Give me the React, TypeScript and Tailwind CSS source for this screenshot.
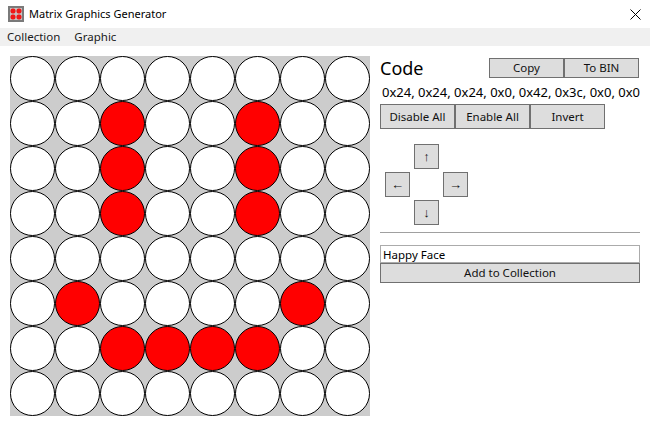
import React from 'react';

const FONT = "font-['Noto_Sans','Open_Sans',sans-serif]";

const matrix = [0x00, 0x24, 0x24, 0x24, 0x00, 0x42, 0x3c, 0x00];

const Btn = ({ label, className }: { label: string; className: string }) => (
    <button className={`flex items-center justify-center bg-[#dddddd] border border-[#707070] leading-none text-[#111] ${className}`}>
        {label}
    </button>
);

export default function App() {
    return (
        <div className={`w-[650px] h-[422px] bg-white overflow-hidden flex flex-col ${FONT}`}>
            {/* title bar */}
            <div className="h-[28px] flex items-center pl-[8px] pr-[9px]">
                <svg width="16" height="16" viewBox="0 0 16 16" className="shrink-0">
                    <rect x="1" y="1" width="14" height="14" fill="#c4c4c4" stroke="#7a7a7a" strokeWidth="2" />
                    <rect x="2.5" y="2.5" width="5" height="5" rx="2" fill="#f01818" />
                    <rect x="8.5" y="2.5" width="5" height="5" rx="2" fill="#f01818" />
                    <rect x="2.5" y="8.5" width="5" height="5" rx="2" fill="#f01818" />
                    <rect x="8.5" y="8.5" width="5" height="5" rx="2" fill="#f01818" />
                </svg>
                <span className="ml-[5px] text-[11px] text-black">Matrix Graphics Generator</span>
                <svg width="11" height="11" viewBox="0 0 11 11" className="ml-auto">
                    <path d="M0.5 0.5L10.5 10.5M10.5 0.5L0.5 10.5" stroke="#000" strokeWidth="1" fill="none" />
                </svg>
            </div>

            {/* menu */}
            <div className="h-[18px] bg-[#f0f0f0] flex items-center pl-[7px] gap-[14px] text-[11.5px] text-[#1a1a1a]">
                <span>Collection</span>
                <span>Graphic</span>
            </div>

            <div className="flex pt-[10px] pl-[10px]">
                {/* led matrix */}
                <div className="w-[360px] h-[360px] bg-[#cccccc] grid grid-cols-8 grid-rows-8 shrink-0">
                    {matrix.flatMap((row, y) =>
                        Array.from({ length: 8 }, (_, x) => {
                            const on = (row >> (7 - x)) & 1;
                            return (
                                <div
                                    key={`${y}-${x}`}
                                    className={on ? 'rounded-full border border-black bg-[#ff0000]' : 'rounded-full border border-black bg-white'}
                                />
                            );
                        })
                    )}
                </div>

                {/* controls */}
                <div className="w-[260px] ml-[10px] flex flex-col">
                    <div className="flex items-start h-[25px]">
                        <span className="text-[18px] leading-[24px] text-black">Code</span>
                        <div className="ml-auto mr-[1px] mt-[2px] flex">
                            <Btn label="Copy" className="w-[75px] h-[20px] text-[11.5px]" />
                            <Btn label="To BIN" className="w-[75px] h-[20px] text-[11.5px]" />
                        </div>
                    </div>
                    <div className="h-[23px] text-[13px] leading-[22px] text-black whitespace-nowrap pl-[2px]">
                        0x24, 0x24, 0x24, 0x0, 0x42, 0x3c, 0x0, 0x0
                    </div>
                    <div className="flex">
                        <Btn label="Disable All" className="w-[75px] h-[25px] text-[11.5px]" />
                        <Btn label="Enable All" className="w-[75px] h-[25px] text-[11.5px]" />
                        <Btn label="Invert" className="w-[75px] h-[25px] text-[11.5px]" />
                    </div>

                    {/* arrows */}
                    <div className="mt-[15px] ml-[5px] grid grid-cols-[25px_25px_25px] grid-rows-[25px_25px_25px] gap-x-[4px] gap-y-[3px] w-max">
                        <Btn label="↑" className="col-start-2 row-start-1 text-[13px]" />
                        <Btn label="←" className="col-start-1 row-start-2 text-[13px]" />
                        <Btn label="→" className="col-start-3 row-start-2 text-[13px]" />
                        <Btn label="↓" className="col-start-2 row-start-3 text-[13px]" />
                    </div>

                    <div className="mt-[7px] h-[1px] bg-[#a0a0a0]" />

                    <input
                        readOnly
                        value="Happy Face"
                        className="mt-[12px] h-[18px] border border-[#ababab] px-[2px] text-[11.5px] leading-none text-black outline-none"
                    />
                    <Btn label="Add to Collection" className="h-[20px] text-[11.5px]" />
                </div>
            </div>
        </div>
    );
}
